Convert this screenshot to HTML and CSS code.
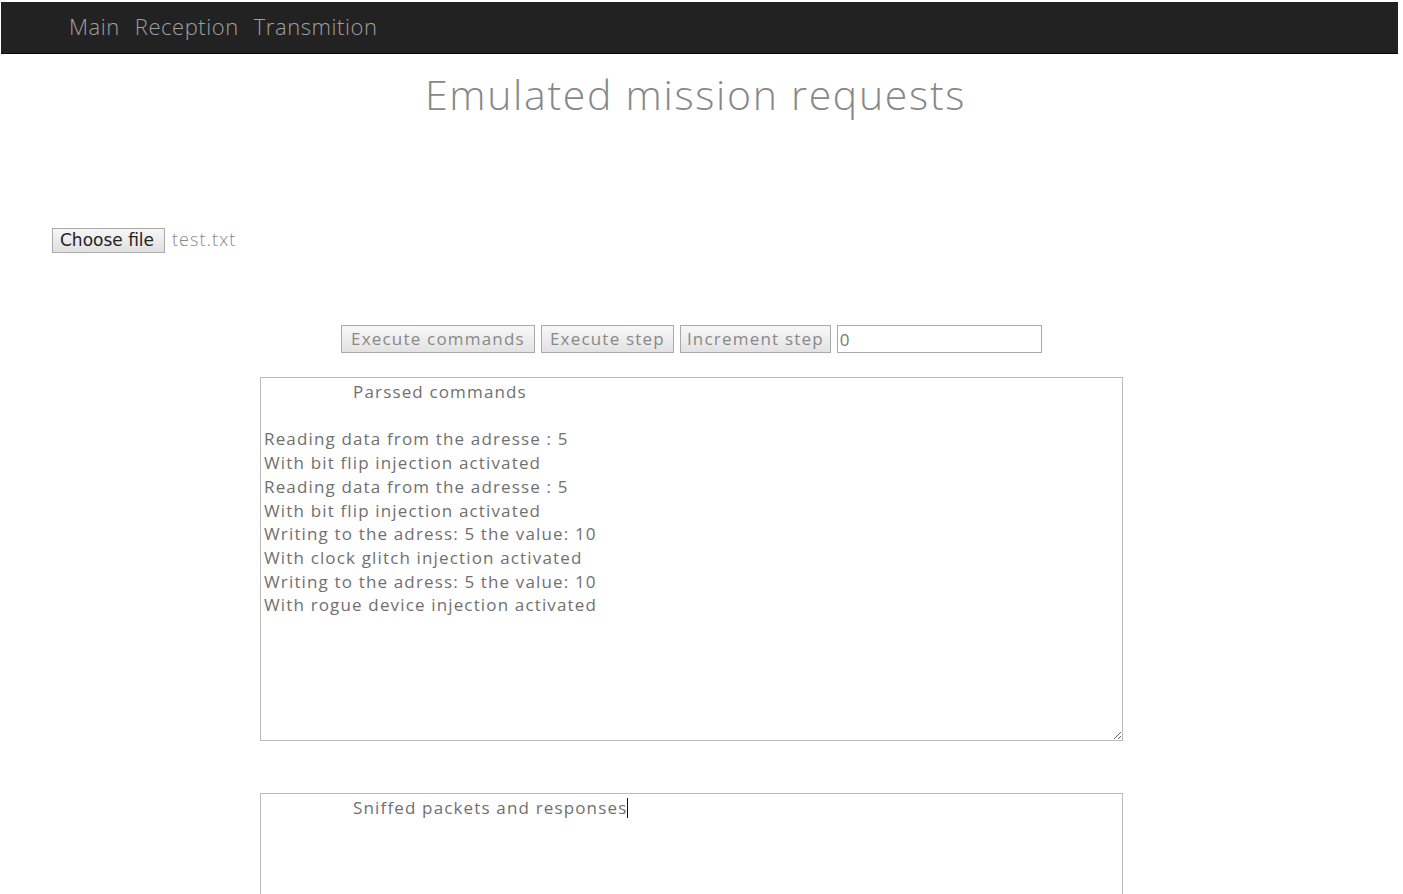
FILE: index.html
```html
<!DOCTYPE html>
<html>
<head>
<meta charset="utf-8">
<link rel="stylesheet" href="styles.css">
</head>
<body>
<nav class="navbar">
  <a class="nav-link" href="#">Main</a>
  <a class="nav-link" href="#">Reception</a>
  <a class="nav-link" href="#">Transmition</a>
</nav>
<h1 class="title">Emulated mission requests</h1>
<div class="file-row">
  <span class="file-btn">Choose file</span>
  <span class="file-name">test.txt</span>
</div>
<div class="controls">
  <button class="btn btn-wide">Execute commands</button>
  <button class="btn">Execute step</button>
  <button class="btn btn-narrow">Increment step</button>
  <input class="step-input" type="text" value="0">
</div>
<div class="areas">
<textarea class="area area-main">                Parssed commands

Reading data from the adresse : 5
With bit flip injection activated
Reading data from the adresse : 5
With bit flip injection activated
Writing to the adress: 5 the value: 10
With clock glitch injection activated
Writing to the adress: 5 the value: 10
With rogue device injection activated</textarea>
<div class="area area-second"><span class="pad">                </span>Sniffed packets and responses<span class="caret"></span></div>
</div>
</body>
</html>
```
FILE: styles.css
```css
html, body {
  margin: 0;
  padding: 0;
  background: #fff;
  overflow: hidden;
}
body {
  font-family: "Open Sans", "DejaVu Sans", sans-serif;
  color: #777;
  height: 894px;
}
.navbar {
  margin: 2px 5px 0 1px;
  height: 52px;
  background: #222;
  border-bottom: 1px solid #080808;
  display: flex;
  align-items: center;
  padding-left: 68px;
  padding-bottom: 4px;
  gap: 15px;
  box-sizing: border-box;
}
.nav-link {
  color: #a0a0a0;
  text-decoration: none;
  font-size: 22px;
  font-weight: 300;
  letter-spacing: 0.55px;
}
.title {
  margin: 14px 0 0 0;
  text-align: center;
  font-weight: 300;
  font-size: 41px;
  color: #888;
  letter-spacing: 1.7px;
  line-height: 52px;
  padding-right: 12px;
}
.file-row {
  margin: 108px 0 0 52px;
  display: flex;
  align-items: center;
  gap: 7px;
}
.file-btn {
  font-family: "DejaVu Sans", sans-serif;
  font-size: 17px;
  color: #222;
  border: 1px solid #aaa;
  background: linear-gradient(#f6f6f6, #e0e0e0);
  padding: 0 7px;
  height: 25px;
  line-height: 23px;
  box-sizing: border-box;
  width: 113px;
}
.file-name {
  font-size: 18px;
  color: #888;
  font-weight: 300;
  letter-spacing: 1.1px;
  margin-top: -4px;
}
.controls {
  margin: 72px 0 0 341px;
  display: flex;
  gap: 6px;
  height: 28px;
}
.btn {
  font-family: "Open Sans", sans-serif;
  font-size: 17px;
  color: #888;
  border: 1px solid #aaa;
  background: linear-gradient(#f8f8f8, #e2e2e2);
  padding: 0 8px;
  height: 28px;
  line-height: 26px;
  margin: 0;
  letter-spacing: 1.2px;
}
.btn-wide {
  padding: 0 9px;
}
.btn-narrow {
  padding: 0 6px;
}
.step-input {
  width: 205px;
  height: 28px;
  box-sizing: border-box;
  border: 1px solid #aaa;
  font-family: "Open Sans", sans-serif;
  font-size: 17px;
  color: #777;
  padding: 0 2px;
  margin: 0;
}
.areas {
  margin: 24px 0 0 260px;
  display: flex;
  flex-direction: column;
  gap: 52px;
}
.area {
  width: 863px;
  box-sizing: border-box;
  border: 1px solid #bbb;
  font-family: "Open Sans", sans-serif;
  font-size: 17px;
  line-height: 23.7px;
  color: #707070;
  padding: 2px 3px;
  margin: 0;
  white-space: pre;
  letter-spacing: 1.15px;
}
.area-main {
  height: 364px;
  resize: both;
  display: block;
  outline: none;
}
.area-second {
  height: 120px;
}
.caret {
  display: inline-block;
  width: 1px;
  height: 20px;
  background: #111;
  vertical-align: -4px;
}
```
